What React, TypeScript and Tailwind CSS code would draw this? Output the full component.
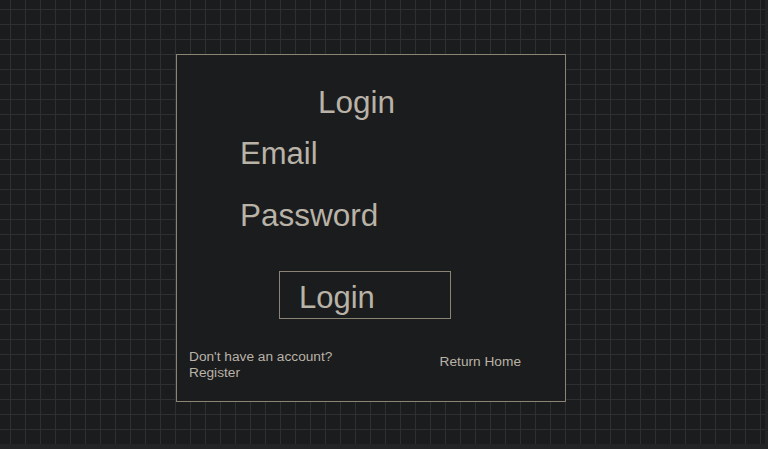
export default function App() {
  return (
    <div className="h-[449px] w-full bg-[#232426] font-['Liberation_Sans',Arial,sans-serif] text-[#b9b2a7]">
      <div className="h-[444px] w-[765px] bg-[#1b1c1e] bg-[linear-gradient(to_right,#2e2f31_1px,transparent_1px),linear-gradient(to_bottom,#2e2f31_1px,transparent_1px)] bg-[size:15px_15px] bg-[position:10px_9px] pt-[54px] pl-[176px]">
        {/* Card */}
        <div className="flex h-[348px] w-[390px] flex-col border border-[#8b8373] bg-[#1b1c1e]">
          <h1 className="mt-[25px] pl-[141px] text-[31.5px] leading-[44px]">Login</h1>

          <div className="mt-[8px] pl-[63px] text-[31px] leading-[44px]">Email</div>
          <div className="mt-[17px] pl-[63px] text-[31.5px] leading-[44px]">Password</div>

          <button className="mt-[34px] ml-[102px] flex h-[48px] w-[172px] items-center border border-[#8b8373] pl-[19px] pt-[4px] text-[31px] leading-none text-[#b9b2a7]">
            Login
          </button>

          <div className="mt-[30px] flex items-center justify-between pl-[12px] pr-[44px] text-[13.7px] leading-[16px]">
            <div>
              <div>Don't have an account?</div>
              <div>Register</div>
            </div>
            <div className="-mt-[7px]">Return Home</div>
          </div>
        </div>
      </div>
    </div>
  )
}
